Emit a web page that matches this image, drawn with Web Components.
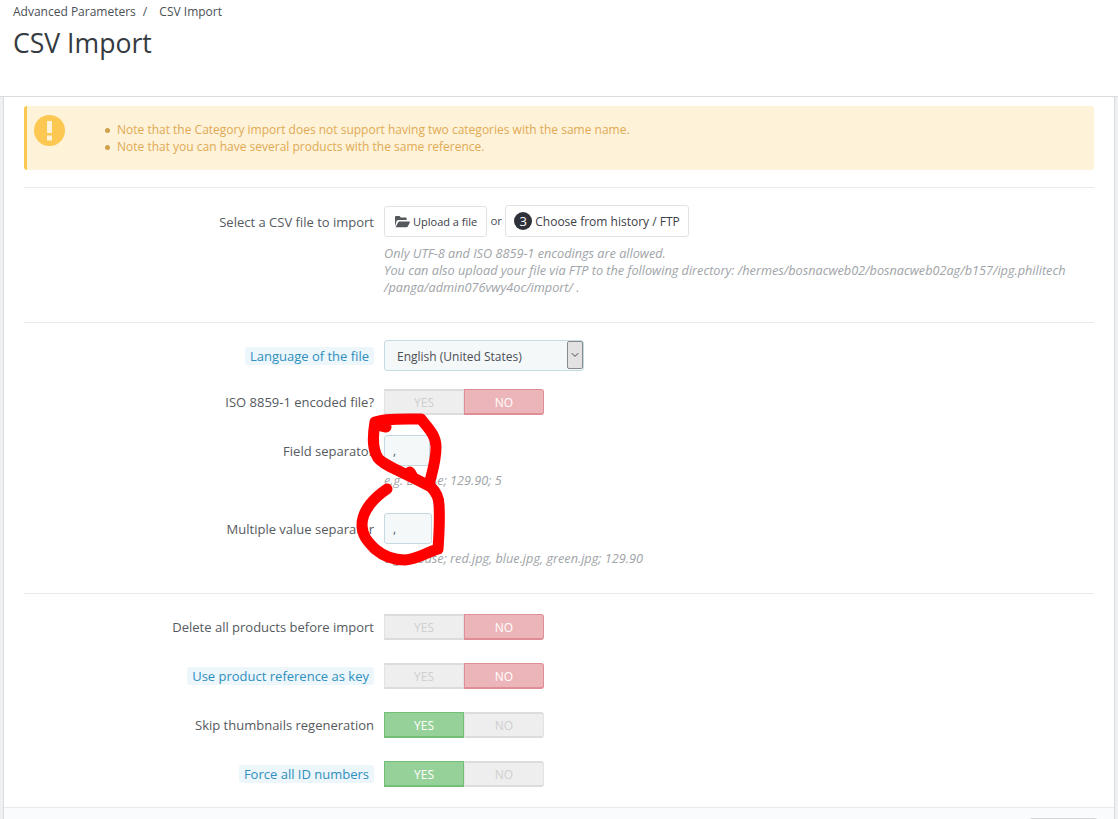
<!DOCTYPE html>
<html lang="en"><head><meta charset="utf-8"><title>CSV Import</title>
<style>
html,body{margin:0;padding:0;background:#fff;height:819px;overflow:hidden;font-family:"Open Sans",sans-serif;color:#555}
x-annotation{position:absolute;left:0;top:0;width:1118px;height:819px;pointer-events:none}
</style></head><body>
<x-page-header crumb="Advanced Parameters" current="CSV Import" title="CSV Import"></x-page-header>
<x-panel>
  <x-alert>
    <li>Note that the Category import does not support having two categories with the same name.</li>
    <li>Note that you can have several products with the same reference.</li>
  </x-alert>
  <x-divider style="margin:17px 0 17px"></x-divider>
  <x-row label="Select a CSV file to import" style="--lp:2px">
    <x-btn icon="folder" style="margin-top:1px;height:31px;padding:0 9px 0 9px">Upload a file</x-btn><x-or>or</x-or><x-btn badge="3" style="font-size:12px;height:32px">Choose from history / FTP</x-btn>
    <x-hint style="margin-top:8px"><div>Only UTF-8 and ISO 8859-1 encodings are allowed.</div><div>You can also upload your file via FTP to the following directory: /hermes/bosnacweb02/bosnacweb02ag/b157/ipg.philitech</div><div>/panga/admin076vwy4oc/import/ .</div></x-hint>
  </x-row>
  <x-divider style="margin:26px 0 17px"></x-divider>
  <x-row label="Language of the file" tip style="--lp:1px">
    <x-select>English (United States)</x-select>
  </x-row>
  <x-row label="ISO 8859-1 encoded file?" style="margin-top:15px"><x-switch value="no"></x-switch></x-row>
  <x-row label="Field separator" style="margin-top:17px;--lp:1px">
    <x-field w="46">,</x-field>
    <x-hint style="margin-top:6px">e.g. Blouse; 129.90; 5</x-hint>
  </x-row>
  <x-row label="Multiple value separator" style="margin-top:24px;--lp:1px">
    <x-field w="48">,</x-field>
    <x-hint style="margin-top:6px">e.g. Blouse; red.jpg, blue.jpg, green.jpg; 129.90</x-hint>
  </x-row>
  <x-divider style="margin:26px 0 18px"></x-divider>
  <x-row label="Delete all products before import"><x-switch value="no"></x-switch></x-row>
  <x-row label="Use product reference as key" tip style="margin-top:18px"><x-switch value="no"></x-switch></x-row>
  <x-row label="Skip thumbnails regeneration" style="margin-top:18px"><x-switch value="yes"></x-switch></x-row>
  <x-row label="Force all ID numbers" tip style="margin-top:18px"><x-switch value="yes"></x-switch></x-row>
  <x-panel-footer slot="footer"><x-footer-btn></x-footer-btn></x-panel-footer>
</x-panel>
<x-annotation></x-annotation>
<script>
function def(name, css, html){
  customElements.define(name, class extends HTMLElement{
    connectedCallback(){
      if(this.shadowRoot) return;
      const r=this.attachShadow({mode:'open'});
      r.innerHTML='<style>'+css+'</style>'+(typeof html==='function'?html(this):html);
    }
  });
}
def('x-page-header',
 ':host{display:block;height:96px;background:#fff;border-bottom:1px solid #d9dcde;padding:0 13px;color:#363a41}'+
 '.c{font-size:12px;line-height:16px;padding-top:4px;color:#4a4f56}.s{margin:0 9px 0 7px}h1{margin:5px 0 0;font-weight:400;font-size:26.6px;line-height:36px;color:#363a41}',
 h=>`<div class="c">${h.getAttribute('crumb')}<span class="s">/</span> ${h.getAttribute('current')}</div><h1>${h.getAttribute('title')}</h1>`);
def('x-panel',
 ':host{display:block;height:722px;box-sizing:border-box;padding:0 4px;background:#eef0f2}'+
 '.w{display:flex;flex-direction:column;height:100%;background:#fff;box-shadow:-1px 0 0 #dadde0,1px 0 0 #dadde0}'+
 '.b{flex:1;padding:9px 20px 0}',
 '<div class="w"><div class="b"><slot></slot></div><slot name="footer"></slot></div>');
def('x-alert',
 ':host{display:flex;height:64px;box-sizing:border-box;background:#fef2d8;border-left:3px solid #fdc851;border-radius:3px;color:#e0aa55;font-size:12px;line-height:16.5px}'+
 '.i{width:31px;height:31px;margin:9px 0 0 7px;flex:none}ul{margin:16px 0 0 0;padding:0 0 0 40px;list-style:none}'+
 '::slotted(li){list-style:none;position:relative;padding-left:12px}',
 `<svg class="i" viewBox="0 0 31 31"><circle cx="15.5" cy="15.5" r="15.5" fill="#fdc851"/><rect x="13" y="6" width="5" height="12" fill="#fef2d8"/><rect x="13" y="20.5" width="5" height="5" fill="#fef2d8"/></svg><ul><slot></slot></ul><style>::slotted(li)::before{content:"";position:absolute;left:0;top:6px;width:5px;height:5px;border-radius:50%;background:#d0a04a}</style>`);
def('x-divider',':host{display:block;height:1px;background:#e7e9eb}','');
def('x-row',
 ':host{display:grid;grid-template-columns:350px 1fr;column-gap:10px;font-size:13px}'+
 '.l{justify-self:end;line-height:31px;padding-top:var(--lp,0);color:#555a60;white-space:nowrap}.l span.t{background:#ecf6fb;color:#2f8fbd;border-radius:3px;padding:0 5px}'+
 '.c{min-width:0}',
 h=>{const t=h.hasAttribute('tip');const l=h.getAttribute('label');return `<div class="l">${t?`<span class="t">${l}</span>`:l}</div><div class="c"><slot></slot></div>`});
def('x-btn',
 ':host{display:inline-flex;vertical-align:top;align-items:center;box-sizing:border-box;border:1px solid #dfe3e6;border-radius:3px;background:#fff;color:#3c4046;font-size:11px;padding:0 8px 0 10px;white-space:nowrap}'+
 'svg{width:16px;height:13px;margin-right:3px}.b{display:inline-flex;width:18px;height:18px;border-radius:50%;background:#2e3138;color:#fff;align-items:center;justify-content:center;font-size:13px;margin:0 3px 0 -2px}',
 h=>{const bg=h.getAttribute('badge');const ic=h.getAttribute('icon');
  return (ic?`<svg viewBox="0 0 16 13"><path d="M1 11.5V2.2C1 1.5 1.5 1 2.2 1h3.3l1.4 1.5h4.6c.7 0 1.2.5 1.2 1.2V5H4.4c-.8 0-1.4.4-1.8 1.1zM1.6 12.3l2.6-5.1c.3-.6.7-.8 1.3-.8h9.6c.6 0 .9.5.7 1l-2 4.2c-.3.5-.7.7-1.2.7z" fill="#55585c"/></svg>`:'')+
  (bg?`<span class="b">${bg}</span>`:'')+'<slot></slot>'});
def('x-or',':host{display:inline-block;vertical-align:top;width:18px;text-align:center;font-size:11.5px;line-height:31px;color:#4a4f56}','<slot></slot>');
def('x-hint',':host{display:block;font-style:italic;font-size:12.7px;line-height:17px;color:#a0a4a8;white-space:nowrap}','<slot></slot>');
def('x-select',
 ':host{display:block;position:relative;width:200px;height:31px;box-sizing:border-box;border:1px solid #c5dbe4;border-radius:3px;background:#f5f8f9;color:#4a4f56;font-size:12px;line-height:31px;padding-left:12px}'+
 '.a{position:absolute;right:0;top:0;width:16px;height:28px;background:#e2e2e2;border:1px solid #8a8a8a;border-radius:2px;box-sizing:border-box;display:flex;align-items:center;justify-content:center}',
 '<slot></slot><span class="a"><svg width="8" height="6" viewBox="0 0 8 6"><path d="M.8 1.2L4 4.4l3.2-3.2" fill="none" stroke="#444" stroke-width="1"/></svg></span>');
def('x-switch',
 ':host{display:flex;width:160px;height:26px;margin-top:2px;font-size:12px;border-radius:3px}'+
 '.o{flex:1;display:flex;align-items:center;justify-content:center;box-sizing:border-box;padding-top:1px;background:#eeeeee;color:#cfcfcf;border:1px solid #e2e2e2;border-top:2px solid #dcdcdc;border-bottom:2px solid #dcdcdc}'+
 '.o:first-child{border-radius:3px 0 0 3px}.o:last-child{border-radius:0 3px 3px 0}'+
 '.y{background:#97d19a;color:#fff;border:1px solid #72bf78;border-bottom-width:2px}.n{background:#ecb5ba;color:#fff;border:1px solid #e08e95;border-bottom-width:2px}',
 h=>{const v=h.getAttribute('value');return `<span class="o ${v==='yes'?'y':''}">YES</span><span class="o ${v==='no'?'n':''}">NO</span>`});
def('x-field',
 ':host{display:block;height:31px;box-sizing:border-box;border:1px solid #c5d8df;border-radius:3px;background:#f5f8f9;color:#4a5a70;font-size:12px;line-height:29px;padding-left:8px}',
 h=>{h.style.width=h.getAttribute('w')+'px';return '<slot></slot>'});
def('x-panel-footer',':host{display:block;height:12px;box-sizing:border-box;background:#fafbfc;border-top:1px solid #e7e9eb;position:relative;overflow:hidden}','<slot></slot>');
def('x-footer-btn',':host{position:absolute;right:16px;top:10px;width:69px;height:10px;background:#fff;border:1px solid #d5d7d9;border-radius:3px;box-sizing:border-box}','');
def('x-annotation',':host{display:block}svg{display:block}',
 `<svg width="1118" height="819" viewBox="0 0 1118 819"><path d="M386 427C380 426 376 424 375 422C385 418 405 419 421 419C428 428 436 435 436 447C436 462 432 472 429 485M375 422C372 440 373 450 378 458C384 466 404 472 431 487C436 492 439 497 439 505C440 520 439 535 438 549C425 553 418 559 405 560C392 560 382 555 375 549C367 541 362 535 362 525C362 510 375 497 387 489M410 472L413 477" fill="none" stroke="#ff0000" stroke-width="11" stroke-linecap="round" stroke-linejoin="round"/></svg>`);
</script>
</body></html>
